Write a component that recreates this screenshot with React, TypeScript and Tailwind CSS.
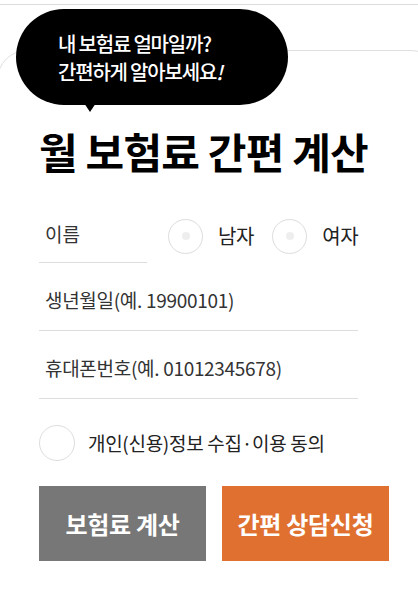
import { useState } from 'react'

const font = { fontFamily: '"Noto Sans CJK KR", "Noto Sans", sans-serif' }

function Radio({ label, checked, onClick }: { label: string; checked: boolean; onClick: () => void }) {
  return (
    <button type="button" onClick={onClick} className="flex items-center gap-[15px]">
      <span className="flex h-[35px] w-[35px] items-center justify-center rounded-full border border-[#dddddd] bg-white">
        <span className={`h-[8px] w-[8px] rounded-full ${checked ? 'bg-[#e07030]' : 'bg-[#eeeeee]'}`} />
      </span>
      <span className="text-[20px] tracking-[-0.3px] text-[#222]">{label}</span>
    </button>
  )
}

function Field({ placeholder }: { placeholder: string }) {
  return (
    <div className="w-[319px] border-b border-[#dddddd]">
      <input
        placeholder={placeholder}
        className="h-[67px] w-full bg-transparent px-[6px] pt-[6px] text-[19px] tracking-[-0.3px] text-[#333] placeholder:text-[#333] outline-none"
        style={font}
      />
    </div>
  )
}

export default function App() {
  const [gender, setGender] = useState<'m' | 'f' | null>(null)
  const [agree, setAgree] = useState(false)

  return (
    <div className="relative h-[592px] w-[418px] overflow-hidden bg-white" style={font}>
      <div className="mt-[4px] border-t border-[#dddddd]" />

      <div className="ml-[-3px] mt-[45px] w-[444px] rounded-t-[30px] border border-[#e0e0e0] pb-[80px] pl-[41px] pt-[79px]">
        <h1 className="text-[42px] font-bold leading-none tracking-[-0.8px] text-black">월 보험료 간편 계산</h1>

        <div className="mt-[32px] flex items-center">
          <div className="w-[108px] border-b border-[#dddddd]">
            <input
              placeholder="이름"
              className="h-[58px] w-full bg-transparent px-[6px] text-[19px] text-[#333] placeholder:text-[#333] outline-none"
              style={font}
            />
          </div>
          <div className="ml-[21px] mt-[5px] flex items-center gap-[18px]">
            <Radio label="남자" checked={gender === 'm'} onClick={() => setGender('m')} />
            <Radio label="여자" checked={gender === 'f'} onClick={() => setGender('f')} />
          </div>
        </div>

        <Field placeholder="생년월일(예. 19900101)" />
        <Field placeholder="휴대폰번호(예. 01012345678)" />

        <button type="button" onClick={() => setAgree(!agree)} className="mt-[26px] flex items-center gap-[13px]">
          <span
            className={`h-[36px] w-[36px] rounded-full border ${agree ? 'border-[#e07030] bg-[#e07030]' : 'border-[#dddddd] bg-white'}`}
          />
          <span className="text-[19px] tracking-[-0.3px] text-[#222]">개인(신용)정보 수집·이용 동의</span>
        </button>

        <div className="mt-[25px] flex gap-[16px]">
          <button type="button" className="h-[75px] w-[167px] bg-[#777777] text-[24px] font-bold tracking-[-0.3px] text-white">
            보험료 계산
          </button>
          <button type="button" className="h-[75px] w-[167px] bg-[#e07030] text-[24px] font-bold tracking-[-0.3px] text-white">
            간편 상담신청
          </button>
        </div>
      </div>

      <div className="absolute left-[16px] top-[9px] flex h-[96px] w-[272px] items-center rounded-full bg-black pl-[42px]">
        <p className="pt-[1px] text-[20px] font-medium leading-[28px] tracking-[-1.2px] text-white">
          내 보험료 얼마일까?
          <br />
          간편하게 알아보세요<span className="italic">!</span>
        </p>
        <span className="absolute left-[68px] top-[94px] h-0 w-0 border-x-[6px] border-t-[9px] border-x-transparent border-t-black" />
      </div>
    </div>
  )
}
